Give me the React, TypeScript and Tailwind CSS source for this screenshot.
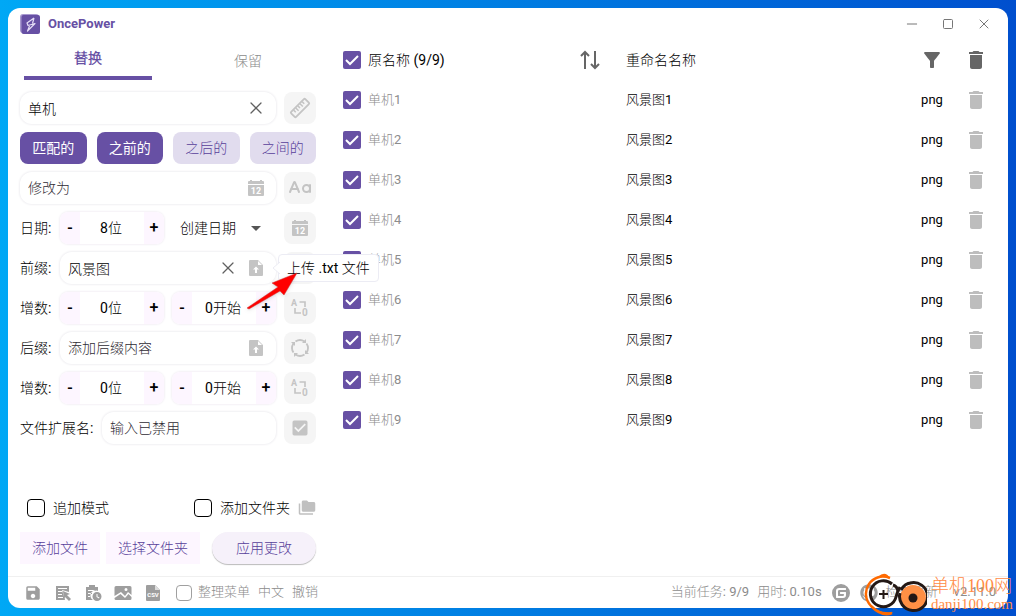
import type { ReactNode } from 'react'
import { CaseSensitive, Minus, Square, X } from 'lucide-react'
import { FaGithub } from 'react-icons/fa'
import { MdArrowDropDown, MdCheckBox, MdDelete, MdFilterAlt, MdFolderCopy, MdSave } from 'react-icons/md'
import { SiGitee } from 'react-icons/si'

const files = Array.from({ length: 9 }, (_, i) => ({
  name: `单机${i + 1}`,
  newName: `风景图${i + 1}`,
  ext: 'png',
}))

const modes = [
  { label: '匹配的', active: true },
  { label: '之前的', active: true },
  { label: '之后的', active: false },
  { label: '之间的', active: false },
]

const LogoIcon = () => (
  <svg className="size-5" viewBox="0 0 20 20" fill="none">
    <rect x="0" y="0" width="19" height="19" rx="3" fill="#a899cf" />
    <rect x="1.500" y="1" width="18.500" height="19" rx="2" fill="#6750a4" />
    <path d="m14 4-7 5 1 2.500 7-2-7.500 7.500 2-5M14 4l-1.500 5.500" stroke="#e4dcf5" strokeWidth="1.200" strokeLinejoin="round" />
  </svg>
)

const CalendarIcon = () => (
  <svg className="size-5" viewBox="0 0 20 20" fill="currentColor">
    <path d="M4 2h2v1h8V2h2v1h1a1 1 0 0 1 1 1v2H2V4a1 1 0 0 1 1-1h1zM2 7h16v10a1 1 0 0 1-1 1H3a1 1 0 0 1-1-1z" />
    <text x="10" y="16" textAnchor="middle" fontSize="9" fontWeight="700" fill="#fff">12</text>
  </svg>
)

const RulerIcon = () => (
  <svg className="size-6" viewBox="0 0 24 24" fill="none" stroke="currentColor" strokeWidth="1.800">
    <g transform="rotate(-45 12 12)">
      <rect x="2" y="8.500" width="20" height="7" rx="1" />
      <path d="M6 9v3M9 9v4M12 9v3M15 9v4M18 9v3" strokeWidth="1.500" />
    </g>
  </svg>
)

const ConvertIcon = () => (
  <svg className="size-5" viewBox="0 0 20 20" fill="none" stroke="currentColor" strokeWidth="1.600">
    <path d="M9.500 4H15v5M5 10v5h6" />
    <text x="1" y="8" fontSize="9" fontWeight="700" fill="currentColor" stroke="none">A</text>
    <text x="12" y="18" fontSize="10" fontWeight="700" fill="currentColor" stroke="none">0</text>
  </svg>
)

const CycleIcon = () => (
  <svg className="size-5" viewBox="0 0 20 20" fill="none" stroke="currentColor" strokeWidth="1.800">
    <path d="M5.500 3.500a8 8 0 0 1 9 0M16.500 5.500a8 8 0 0 1 0 9M14.500 16.500a8 8 0 0 1-9 0M3.500 14.500a8 8 0 0 1 0-9" />
    <g fill="currentColor" stroke="none">
      <path d="M16 1v4h-4zM19 16h-4v-4zM4 19v-4h4zM1 4h4v4z" />
    </g>
  </svg>
)

const UploadIcon = () => (
  <svg className="size-5" viewBox="0 0 20 20" fill="currentColor">
    <path fillRule="evenodd" d="M5 2h7l5 5v10a1 1 0 0 1-1 1H4a1 1 0 0 1-1-1V3a1 1 0 0 1 1-1zM12 3v4h4zM10 8.500l-3 3h2V15h2v-3.500h2z" />
  </svg>
)

const SortIcon = () => (
  <svg className="size-6" viewBox="0 0 24 24" fill="none" stroke="currentColor" strokeWidth="2">
    <path d="M7 21V4M3 8l4-4 4 4M17 3v17M13 16l4 4 4-4" />
  </svg>
)

const LogIcon = () => (
  <svg className="size-[18px]" viewBox="0 0 18 18" fill="currentColor">
    <path fillRule="evenodd" d="M2 2h13v6l-7-2 3 10H2zM4 4v1h9V4zM4 7v1h4V7zM4 10v1h4v-1zM4 13v1h5v-1z" />
    <path d="m9 7 7 3-3 1 4 4-2 2-4-4-1 3z" />
  </svg>
)

const ClipboardClockIcon = () => (
  <svg className="size-[18px]" viewBox="0 0 18 18" fill="currentColor">
    <path fillRule="evenodd" d="M2 3h3V1h6v2h3v4a5 5 0 0 0-5 9H2zM4 6v1h8V6zM4 9v1h4V9zM4 12v1h3v-1z" />
    <path fillRule="evenodd" d="M13 8a4.500 4.500 0 1 0 0 9 4.500 4.500 0 0 0 0-9zM12.500 10h1v2.500l2 1-.5 1-2.500-1.500z" />
  </svg>
)

const PictureIcon = () => (
  <svg className="size-[18px]" viewBox="0 0 18 18" fill="currentColor">
    <path fillRule="evenodd" d="M2 2h14a1.500 1.500 0 0 1 1.500 1.500V11L14 8l-3 4-4-4-6.500 4V3.500A1.500 1.500 0 0 1 2 2zM12 4a1.500 1.500 0 1 0 0 3 1.500 1.500 0 0 0 0-3z" />
    <path d="m.5 14 6-4 4.500 4L14.500 10l3 3v1.500A1.500 1.500 0 0 1 16 16H2a1.500 1.500 0 0 1-1.500-1.500z" />
  </svg>
)

const CsvIcon = () => (
  <svg className="size-[18px]" viewBox="0 0 18 18" fill="currentColor">
    <path d="M3 1h8l5 5v10a1 1 0 0 1-1 1H3a1 1 0 0 1-1-1V2a1 1 0 0 1 1-1z" />
    <path d="M11 1v5h5z" fill="#ddd" />
    <text x="9" y="13" textAnchor="middle" fontSize="6" fontWeight="700" fill="#fff">CSV</text>
  </svg>
)

const CheckBox = ({ label }: { label: string }) => (
  <span className="relative grid size-[18px] place-items-center">
    <input type="checkbox" defaultChecked aria-label={label} className="size-[18px] appearance-none rounded-xs bg-[#6750a4]" />
    <svg className="pointer-events-none absolute size-[18px]" viewBox="0 0 18 18" fill="none" stroke="#fff" strokeWidth="2">
      <path d="m3 9 4 4 8-8" />
    </svg>
  </span>
)

const SideButton = ({ label, children }: { label: string; children: ReactNode }) => (
  <button type="button" aria-label={label} className="grid size-8 shrink-0 place-items-center rounded-lg bg-[#f5f5f5] text-[#c4c4c4]">
    {children}
  </button>
)

interface FieldProps {
  label: string
  value?: string
  placeholder?: string
  children?: ReactNode
}

const Field = ({ label, value, placeholder, children }: FieldProps) => (
  <div className="flex h-8 min-w-0 flex-1 items-center gap-2 rounded-xl bg-white px-2 pr-[10px] shadow-[0_0_2px_1px_#f1f0f3]">
    <input
      type="text"
      aria-label={label}
      defaultValue={value}
      placeholder={placeholder}
      className="h-full w-0 min-w-0 flex-1 bg-transparent outline-none placeholder:text-[#2f2c34]"
    />
    {children}
  </div>
)

const ClearButton = () => (
  <button type="button" aria-label="清除" className="text-[#606060]">
    <X className="size-5" strokeWidth={1.5} />
  </button>
)

const UploadButton = () => (
  <button type="button" aria-label="上传 .txt 文件" className="text-[#c4c4c4]">
    <UploadIcon />
  </button>
)

const Stepper = ({ label, value }: { label: string; value: string }) => (
  <div className="flex h-8 w-26 shrink-0 overflow-hidden rounded-lg bg-white shadow-[0_0_2px_1px_#f4f1f6]">
    <button type="button" aria-label={`${label} -`} className="w-5 bg-[#fdf6ff] text-base font-medium">-</button>
    <input type="text" aria-label={label} defaultValue={value} className="w-0 min-w-0 flex-1 pr-[2px] text-center outline-none" />
    <button type="button" aria-label={`${label} +`} className="w-5 bg-[#fdf6ff] text-base font-medium">+</button>
  </div>
)

const Row = ({ children }: { children: ReactNode }) => <div className="flex h-8 items-center gap-2">{children}</div>

const RowLabel = ({ children }: { children: ReactNode }) => <span className="w-8 shrink-0 whitespace-nowrap">{children}</span>

const Tooltip = () => (
  <div className="pointer-events-none absolute top-0 left-full z-10">
    <div role="tooltip" className="mt-[2px] ml-[2px] flex h-7 items-center rounded border border-[#ececf4] bg-white px-2 whitespace-nowrap">
      上传 .txt 文件
    </div>
    <svg className="absolute top-2 -left-1 h-4 w-2" viewBox="0 0 8 16" fill="#fff" stroke="#ececf4">
      <path d="M8 2 1 8l7 6" />
    </svg>
    <svg className="absolute top-4 -left-8 h-12 w-16 drop-shadow" viewBox="0 0 64 48">
      <path d="M53 5 28 15l6 4L3 40l2 1 31-18 4 4z" fill="#f00" stroke="#c33" strokeWidth=".5" />
    </svg>
  </div>
)

const Sidebar = () => (
  <aside className="flex w-80 shrink-0 flex-col">
    <nav className="grid h-10 shrink-0 grid-cols-2 px-4">
      <button type="button" className="mr-4 border-b-4 border-[#6750a4] font-bold text-[#6750a4]">替换</button>
      <button type="button" className="ml-4 pt-[2px] text-[#8c8c8c]">保留</button>
    </nav>

    <div className="flex flex-col gap-2 px-3 pt-3">
      <Row>
        <Field label="匹配内容" value="单机">
          <ClearButton />
        </Field>
        <SideButton label="长度"><RulerIcon /></SideButton>
      </Row>
      <div className="grid h-8 grid-cols-4 gap-[10px]">
        {modes.map(({ label, active }) => (
          <button
            key={label}
            type="button"
            className={
              active
                ? "rounded-lg bg-[#6750a4] font-['Roboto','Noto_Sans_CJK_SC',sans-serif] text-white"
                : 'rounded-lg bg-[#e1dcee] text-[#583f9a]'
            }
          >
            {label}
          </button>
        ))}
      </div>
      <Row>
        <Field label="修改为" placeholder="修改为">
          <span className="text-[#c4c4c4]"><CalendarIcon /></span>
        </Field>
        <SideButton label="大小写"><CaseSensitive className="size-6" strokeWidth={2} /></SideButton>
      </Row>
      <Row>
        <RowLabel>日期:</RowLabel>
        <Stepper label="日期位数" value="8位" />
        <div className="relative flex flex-1 items-center">
          <select aria-label="日期类型" className="h-8 w-full appearance-none bg-transparent pl-2 outline-none">
            <option>创建日期</option>
          </select>
          <MdArrowDropDown className="pointer-events-none absolute right-2 size-6 text-[#555]" />
        </div>
        <SideButton label="使用日期"><CalendarIcon /></SideButton>
      </Row>
      <Row>
        <RowLabel>前缀:</RowLabel>
        <div className="relative flex flex-1">
          <Field label="前缀" value="风景图">
            <ClearButton />
            <UploadButton />
          </Field>
          <Tooltip />
        </div>
        <SideButton label="前缀循环"><CycleIcon /></SideButton>
      </Row>
      <Row>
        <RowLabel>增数:</RowLabel>
        <Stepper label="前缀位数" value="0位" />
        <Stepper label="前缀起始" value="0开始" />
        <SideButton label="交换前缀"><ConvertIcon /></SideButton>
      </Row>
      <Row>
        <RowLabel>后缀:</RowLabel>
        <Field label="后缀" placeholder="添加后缀内容">
          <UploadButton />
        </Field>
        <SideButton label="后缀循环"><CycleIcon /></SideButton>
      </Row>
      <Row>
        <RowLabel>增数:</RowLabel>
        <Stepper label="后缀位数" value="0位" />
        <Stepper label="后缀起始" value="0开始" />
        <SideButton label="交换后缀"><ConvertIcon /></SideButton>
      </Row>
      <Row>
        <span className="w-[74px] shrink-0 whitespace-nowrap">文件扩展名:</span>
        <Field label="文件扩展名" placeholder="输入已禁用" />
        <SideButton label="启用扩展名"><MdCheckBox className="size-5" /></SideButton>
      </Row>
    </div>

    <div className="mt-auto flex flex-col gap-[14px] px-3 pb-3">
      <div className="flex items-center justify-between pl-[7px]">
        <label className="flex items-center gap-2">
          <input type="checkbox" className="size-[18px] appearance-none rounded-sm border border-black" />
          追加模式
        </label>
        <div className="flex items-center gap-2">
          <label className="flex items-center gap-2">
            <input type="checkbox" className="size-[18px] appearance-none rounded-sm border border-black" />
            添加文件夹
          </label>
          <MdFolderCopy className="size-[18px] text-[#c0c0c0]" />
        </div>
      </div>
      <div className="flex h-8 text-[#583f9a]">
        <button type="button" className="bg-[#fdf6ff] px-3">添加文件</button>
        <button type="button" className="ml-[6px] bg-[#fdf6ff] px-3">选择文件夹</button>
        <button type="button" className="ml-auto rounded-full bg-[#f6f1fa] px-6 shadow-[0_1px_1px_#bbb]">应用更改</button>
      </div>
    </div>
  </aside>
)

const FileTable = () => (
  <main className="min-w-0 flex-1 pr-[10px]">
    <table className="w-full table-fixed">
      <thead>
        <tr className="h-10 text-left">
          <th className="w-10 pl-[15px]"><CheckBox label="全选" /></th>
          <th className="w-[38.5%] font-normal">
            <div className="flex items-center justify-between pr-6">
              原名称 (9/9)
              <button type="button" aria-label="排序" className="text-[#666]"><SortIcon /></button>
            </div>
          </th>
          <th className="font-normal">重命名名称</th>
          <th className="w-11">
            <button type="button" aria-label="筛选" className="grid w-full place-items-center text-[#666]"><MdFilterAlt className="size-6" /></button>
          </th>
          <th className="w-11">
            <button type="button" aria-label="清空" className="grid w-full place-items-center text-[#666]"><MdDelete className="size-6" /></button>
          </th>
        </tr>
      </thead>
      <tbody className="text-[13px]">
        {files.map(({ name, newName, ext }) => (
          <tr key={name} className="h-10">
            <td className="pl-[15px]"><CheckBox label={name} /></td>
            <td className="text-[#8c8c8c]">{name}</td>
            <td>{newName}</td>
            <td className="text-center">{ext}</td>
            <td>
              <button type="button" aria-label="删除" className="grid w-full place-items-center text-[#bdbdbd]"><MdDelete className="size-6" /></button>
            </td>
          </tr>
        ))}
      </tbody>
    </table>
  </main>
)

const Footer = () => (
  <footer className="flex h-8 shrink-0 items-center border-t border-[#f0f0f0] pr-3 pl-4 text-[13px] text-[#8c8c8c]">
    <div className="flex items-center gap-3 text-[#9e9e9e]">
      <MdSave className="size-[18px]" />
      <LogIcon />
      <ClipboardClockIcon />
      <PictureIcon />
      <CsvIcon />
    </div>
    <label className="ml-[14px] flex items-center gap-[6px]">
      <input type="checkbox" className="size-4 appearance-none rounded border border-[#a0a0a0]" />
      整理菜单
    </label>
    <button type="button" className="ml-2">中文</button>
    <button type="button" className="ml-2">撤销</button>
    <div className="ml-auto flex items-center">
      <span>当前任务: 9/9</span>
      <span className="ml-2">用时: 0.10s</span>
      <SiGitee className="ml-[10px] size-[18px] text-[#9e9e9e]" />
      <FaGithub className="ml-[10px] size-[18px] text-[#9e9e9e]" />
      <button type="button" className="ml-2">检查更新</button>
      <span className="ml-4">v2.11.0</span>
    </div>
  </footer>
)

const SiteBadge = () => (
  <div className="pointer-events-none absolute right-0 bottom-0 flex items-center gap-1 pr-[3px] text-[#ff8c46]">
    <svg className="h-11 w-16" viewBox="0 0 64 44" fill="none">
      <path d="M27 6C9-1-5 20 8 34c6 6 14 10 21 7" stroke="#ff6a00" strokeWidth="2.500" />
      <path d="M15 5q7-7 12 1-5-2-12-1zM14 38q10 9 16 2-8 1-16-2z" fill="#ff6a00" />
      <path d="M29 12a13 13 0 1 0 4 13q1-5 4-10" stroke="#231815" strokeWidth="3" />
      <path d="M16 22h9M20.500 18v9" stroke="#231815" strokeWidth="2" />
      <circle cx="50" cy="26" r="13" fill="#ff9045" />
      <path d="M30 13q4 1 5 6M47 11a14 14 0 1 1-10 10M48 11q-6 0-10 7" stroke="#231815" strokeWidth="3" />
      <circle cx="50" cy="26" r="4.500" fill="#231815" />
    </svg>
    <div className="font-['Liberation_Serif','Noto_Sans_CJK_SC_Light','Noto_Sans_CJK_SC',serif] leading-4 whitespace-nowrap">
      <div className="text-lg leading-5">单机100网</div>
      <div className="text-[15px]">danji100.com</div>
    </div>
  </div>
)

export default function App() {
  return (
    <div className="relative flex h-screen bg-linear-to-r from-[#00a8f5] to-[#004fce] p-2 font-['Roboto','Noto_Sans_CJK_SC_Light','Noto_Sans_CJK_SC',sans-serif] text-sm text-black">
      <div className="flex min-w-0 flex-1 flex-col rounded-xl bg-white">
        <header className="flex h-8 shrink-0 items-center pr-[6px] pl-3">
          <LogoIcon />
          <h1 className="ml-2 text-[13px] font-bold text-[#6750a4]">OncePower</h1>
          <div className="ml-auto flex text-[#777]">
            <button type="button" aria-label="最小化" className="grid w-9 place-items-center"><Minus className="size-4" strokeWidth={1.5} /></button>
            <button type="button" aria-label="最大化" className="grid w-9 place-items-center"><Square className="size-3" strokeWidth={2} /></button>
            <button type="button" aria-label="关闭" className="grid w-9 place-items-center"><X className="size-4" strokeWidth={1.5} /></button>
          </div>
        </header>
        <div className="flex min-h-0 flex-1">
          <Sidebar />
          <FileTable />
        </div>
        <Footer />
      </div>
      <SiteBadge />
    </div>
  )
}
